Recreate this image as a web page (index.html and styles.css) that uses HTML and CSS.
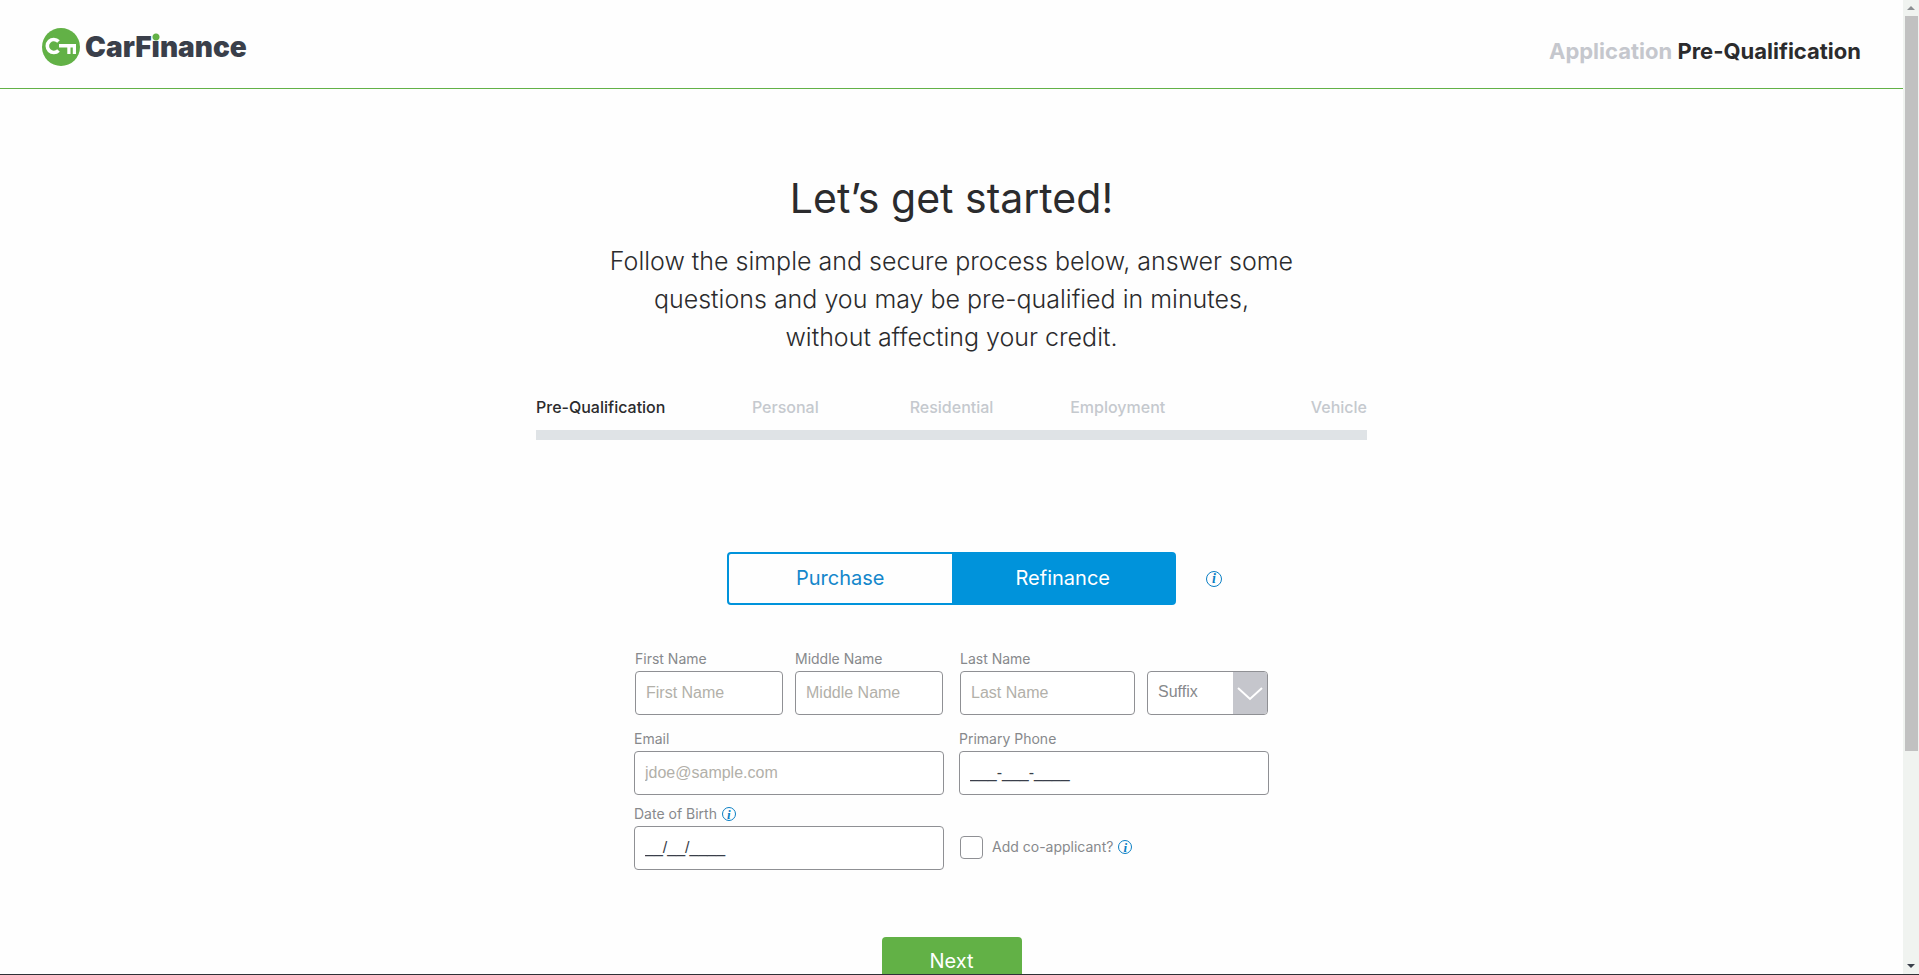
FILE: index.html
```
<!DOCTYPE html>
<html lang="en">
<head>
    <meta charset="UTF-8">
    <meta name="viewport" content="width=device-width, initial-scale=1.0">
    <title>CarFinance - Pre-Qualification</title>
    <link rel="stylesheet" href="styles.css">
</head>
<body>
    <div class="window">
        <div class="page">
            <header class="header">
                <a href="#" class="logo">
                    <svg width="40" height="40" viewBox="0 0 40 40">
                        <circle cx="20" cy="20" r="19" fill="#62b146"/>
                        <path d="M17.500 14.500A6.500 6.500 0 1 0 17.500 23.500" fill="none" stroke="#fff" stroke-width="3.600"/>
                        <path d="M18 17H35V27H31.800V20.600H29.500V27H26.300V20.600H18Z" fill="#fff"/>
                    </svg>
                    <span class="logo-text">CarF<span class="dot">i</span>nance</span>
                </a>
                <div class="header-title"><span>Application</span> Pre-Qualification</div>
            </header>
            <main class="main">
                <h1>Let’s get started!</h1>
                <p class="intro">Follow the simple and secure process below, answer some<br>questions and you may be pre-qualified in minutes,<br>without affecting your credit.</p>
                <div class="progress">
                    <ol class="steps">
                        <li class="active">Pre-Qualification</li>
                        <li>Personal</li>
                        <li>Residential</li>
                        <li>Employment</li>
                        <li>Vehicle</li>
                    </ol>
                    <div class="bar"></div>
                </div>
                <form class="form">
                    <div class="loan-type">
                        <div class="toggle">
                            <button type="button">Purchase</button>
                            <button type="button" class="active">Refinance</button>
                        </div>
                        <button type="button" class="info info-large" aria-label="Loan type help">i</button>
                    </div>
                    <div class="names">
                        <div class="field">
                            <label for="first">First Name</label>
                            <input type="text" id="first" placeholder="First Name">
                        </div>
                        <div class="field">
                            <label for="middle">Middle Name</label>
                            <input type="text" id="middle" placeholder="Middle Name">
                        </div>
                        <div class="field last-name">
                            <label for="last">Last Name</label>
                            <input type="text" id="last" placeholder="Last Name">
                        </div>
                        <div class="select">
                            <select id="suffix" aria-label="Suffix">
                                <option>Suffix</option>
                                <option>Jr</option>
                                <option>Sr</option>
                            </select>
                            <svg class="arrow" width="34" height="42" viewBox="0 0 34 42">
                                <path d="M5 16L17 27L29 16" fill="none" stroke="#fff" stroke-width="2"/>
                            </svg>
                        </div>
                    </div>
                    <div class="contact">
                        <div class="field">
                            <label for="email">Email</label>
                            <input type="email" id="email" placeholder="jdoe@sample.com">
                        </div>
                        <div class="field">
                            <label for="phone">Primary Phone</label>
                            <input type="text" id="phone" value="___-___-____">
                        </div>
                        <div class="field">
                            <div class="label-row">
                                <label for="dob">Date of Birth</label>
                                <button type="button" class="info" aria-label="Date of birth help">i</button>
                            </div>
                            <input type="text" id="dob" value="__/__/____">
                        </div>
                        <div class="co-applicant">
                            <input type="checkbox" id="co">
                            <label for="co">Add co-applicant?</label>
                            <button type="button" class="info" aria-label="Co-applicant help">i</button>
                        </div>
                    </div>
                    <button type="submit" class="next">Next</button>
                </form>
            </main>
        </div>
        <div class="scrollbar">
            <svg width="16" height="16" viewBox="0 0 16 16"><path d="M4 10L8 6L12 10Z" fill="#8b8f92"/></svg>
            <div class="track"><div class="thumb"></div></div>
            <svg width="16" height="16" viewBox="0 0 16 16"><path d="M4 6H12L8 10Z" fill="#3a3f4a"/></svg>
        </div>
    </div>
</body>
</html>
```
FILE: styles.css
```
* {
    box-sizing: border-box;
}
body {
    margin: 0;
    font-family: Inter, "Open Sans", sans-serif;
    color: #2b2b2d;
    background: #fefefe;
}
.window {
    display: flex;
    height: 100vh;
    overflow: hidden;
    border-bottom: 1px solid #2f3136;
}
.page {
    flex: 1;
    overflow: hidden;
}
.header {
    display: flex;
    justify-content: space-between;
    align-items: center;
    height: 89px;
    padding: 5px 42px 0 41px;
    border-bottom: 1px solid #62b146;
}
.logo {
    display: flex;
    align-items: center;
    gap: 4px;
    color: #3a3f4a;
    text-decoration: none;
}
.logo-text {
    font-size: 28px;
    line-height: 40px;
    font-weight: 900;
}
.dot {
    position: relative;
}
/* green dot over the i */
.dot::before {
    content: "";
    position: absolute;
    top: 2px;
    left: 0;
    width: 100%;
    height: 9px;
    background: radial-gradient(circle at 50% 5px, #62b146 3px, #fefefe 4px);
}
.header-title {
    padding-top: 8px;
    font-size: 22px;
    font-weight: 700;
}
.header-title span {
    color: #c5c7cd;
}
.main {
    display: flex;
    flex-direction: column;
    align-items: center;
    padding-top: 84px;
}
h1 {
    margin: 0;
    font-size: 41px;
    line-height: 50px;
    font-weight: 400;
}
.intro {
    margin: 19px 0 0;
    font-size: 25px;
    line-height: 38px;
    font-weight: 300;
    text-align: center;
}
.progress {
    width: 100%;
    max-width: 831px;
    margin-top: 41px;
}
.steps {
    display: grid;
    grid-template-columns: repeat(5, 1fr);
    margin: 0;
    padding: 0;
    list-style: none;
    font-size: 16px;
    line-height: 20px;
    font-weight: 500;
    text-align: center;
    color: #c5c9ce;
}
.steps li:first-child {
    text-align: left;
}
.steps li:last-child {
    text-align: right;
}
.steps .active {
    color: #2b2b2d;
}
.bar {
    height: 10px;
    margin-top: 13px;
    background: #dfe3e6;
}
.form {
    display: flex;
    flex-direction: column;
    align-items: center;
    width: 100%;
    max-width: 635px;
    margin-top: 112px;
}
.loan-type {
    display: grid;
    grid-template-columns: 1fr 449px 1fr;
    align-items: center;
    width: 100%;
}
.toggle {
    display: flex;
    grid-column: 2;
    height: 53px;
    border: 2px solid #0093db;
    border-radius: 4px;
}
.toggle button {
    flex: 1;
    padding: 0 0 1px;
    border: none;
    background: none;
    font-family: inherit;
    font-size: 20px;
    color: #1487cb;
    cursor: pointer;
}
.toggle .active {
    background: #0093db;
    color: #fff;
}
.info {
    width: 14px;
    height: 14px;
    padding: 0;
    border: 1px solid #0a7fc4;
    border-radius: 50%;
    background: none;
    font: italic bold 13px/11px "Liberation Serif", serif;
    color: #0a7fc4;
    cursor: pointer;
}
.info-large {
    width: 16px;
    height: 16px;
    margin-left: 30px;
    font-size: 14px;
    line-height: 13px;
}
.names {
    display: flex;
    align-items: flex-end;
    gap: 12px;
    width: 100%;
    margin-top: 45px;
    padding: 0 1px;
}
.field {
    flex: 148;
    min-width: 0;
}
.last-name {
    flex: 175;
    margin-left: 5px;
}
label {
    display: block;
    font-size: 14px;
    line-height: 18px;
    color: #87898c;
}
.field input, select {
    display: block;
    width: 100%;
    height: 44px;
    padding: 0 10px;
    border: 1px solid #8f9094;
    border-radius: 4px;
    background: #fff;
    font-family: "Liberation Sans", Arial, sans-serif;
    font-size: 16px;
    color: #3a3f4a;
}
.field input {
    margin-top: 3px;
}
input::placeholder {
    color: #b2b0a9;
}
.select {
    position: relative;
    flex: 121;
}
select {
    appearance: none;
    padding-bottom: 3px;
    color: #87898c;
}
.arrow {
    position: absolute;
    top: 1px;
    right: 1px;
    border-radius: 0 3px 3px 0;
    background: #c5c6cc;
    pointer-events: none;
}
.contact {
    display: grid;
    grid-template-columns: 1fr 1fr;
    gap: 10px 15px;
    width: 100%;
    margin-top: 15px;
}
.label-row {
    display: flex;
    align-items: center;
    gap: 5px;
}
.co-applicant {
    display: flex;
    align-items: center;
    padding-top: 19px;
}
.co-applicant input {
    appearance: none;
    width: 23px;
    height: 23px;
    margin: 0 9px 0 1px;
    border: 1px solid #8f9094;
    border-radius: 4px;
    background: #fff;
}
.co-applicant .info {
    margin-left: 5px;
}
.next {
    width: 140px;
    height: 50px;
    margin-top: 67px;
    padding: 0 0 3px;
    border: none;
    border-radius: 4px;
    background: #62b146;
    font-family: inherit;
    font-size: 20px;
    color: #fff;
    cursor: pointer;
}
.scrollbar {
    display: flex;
    flex-direction: column;
    width: 16px;
    background: #f0f3f0;
}
.track {
    flex: 1;
}
.thumb {
    height: 78%;
    margin: 0 1px 0 2px;
    background: #c1c1c1;
}
```
